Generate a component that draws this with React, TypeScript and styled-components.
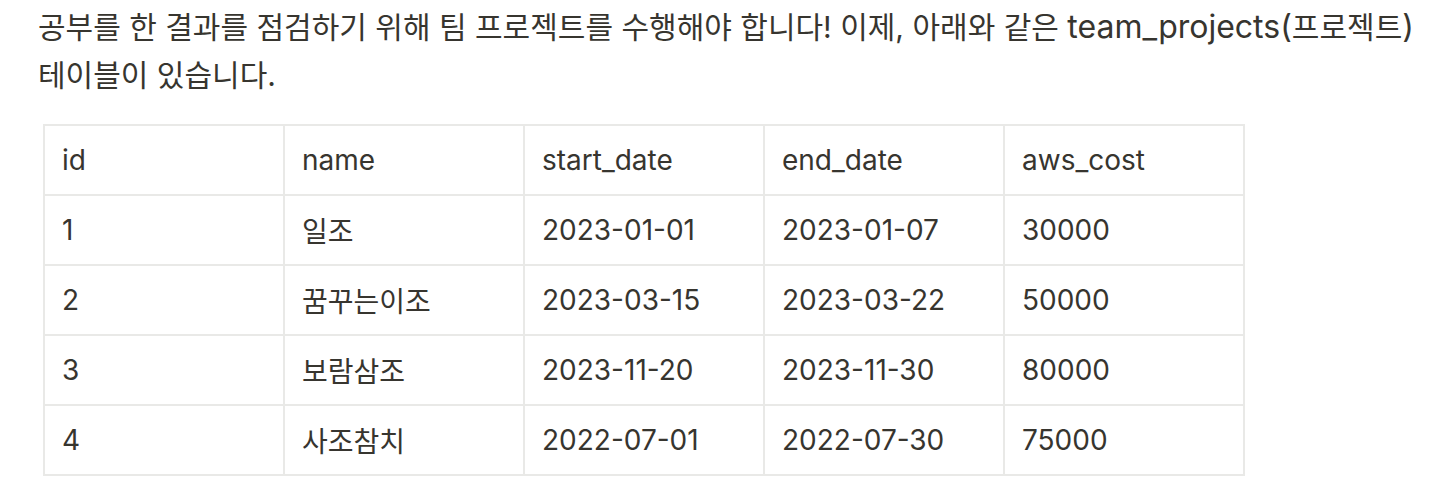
import React from 'react'
import styled, { createGlobalStyle } from 'styled-components'

const GlobalStyle = createGlobalStyle`
  body {
    margin: 0;
    background: #ffffff;
    color: #37352f;
    font-family: Inter, 'Noto Sans CJK KR', sans-serif;
  }
`

const Page = styled.div`
  padding: 3px 0 0 38px;
`

const Paragraph = styled.p`
  margin: 0;
  font-size: 30px;
  line-height: 48px;
`

// latin runs come out narrower than the reference next to hangul, bump them
const Latin = styled.span`
  font-size: 32px;
`

const Table = styled.table`
  margin: 25px 0 0 5px;
  border-collapse: collapse;
  table-layout: fixed;
`

const Cell = styled.td`
  width: 240px;
  height: 70px;
  box-sizing: border-box;
  padding: 0 17px;
  border: 2px solid #e9e9e7;
  font-size: 28px;
  vertical-align: middle;
`

const columns = ['id', 'name', 'start_date', 'end_date', 'aws_cost']

const rows = [
  ['1', '일조', '2023-01-01', '2023-01-07', '30000'],
  ['2', '꿈꾸는이조', '2023-03-15', '2023-03-22', '50000'],
  ['3', '보람삼조', '2023-11-20', '2023-11-30', '80000'],
  ['4', '사조참치', '2022-07-01', '2022-07-30', '75000'],
]

const App = () => {
  return (
    <Page>
      <GlobalStyle />
      <Paragraph>
        공부를 한 결과를 점검하기 위해 팀 프로젝트를 수행해야 합니다! 이제, 아래와 같은 <Latin>team_projects(</Latin>
        프로젝트<Latin>)</Latin>
        <br />
        테이블이 있습니다.
      </Paragraph>
      <Table>
        <tbody>
          <tr>
            {columns.map((c) => (
              <Cell key={c}>{c}</Cell>
            ))}
          </tr>
          {rows.map((r) => (
            <tr key={r[0]}>
              {r.map((v, i) => (
                <Cell key={i}>{v}</Cell>
              ))}
            </tr>
          ))}
        </tbody>
      </Table>
    </Page>
  )
}

export default App
